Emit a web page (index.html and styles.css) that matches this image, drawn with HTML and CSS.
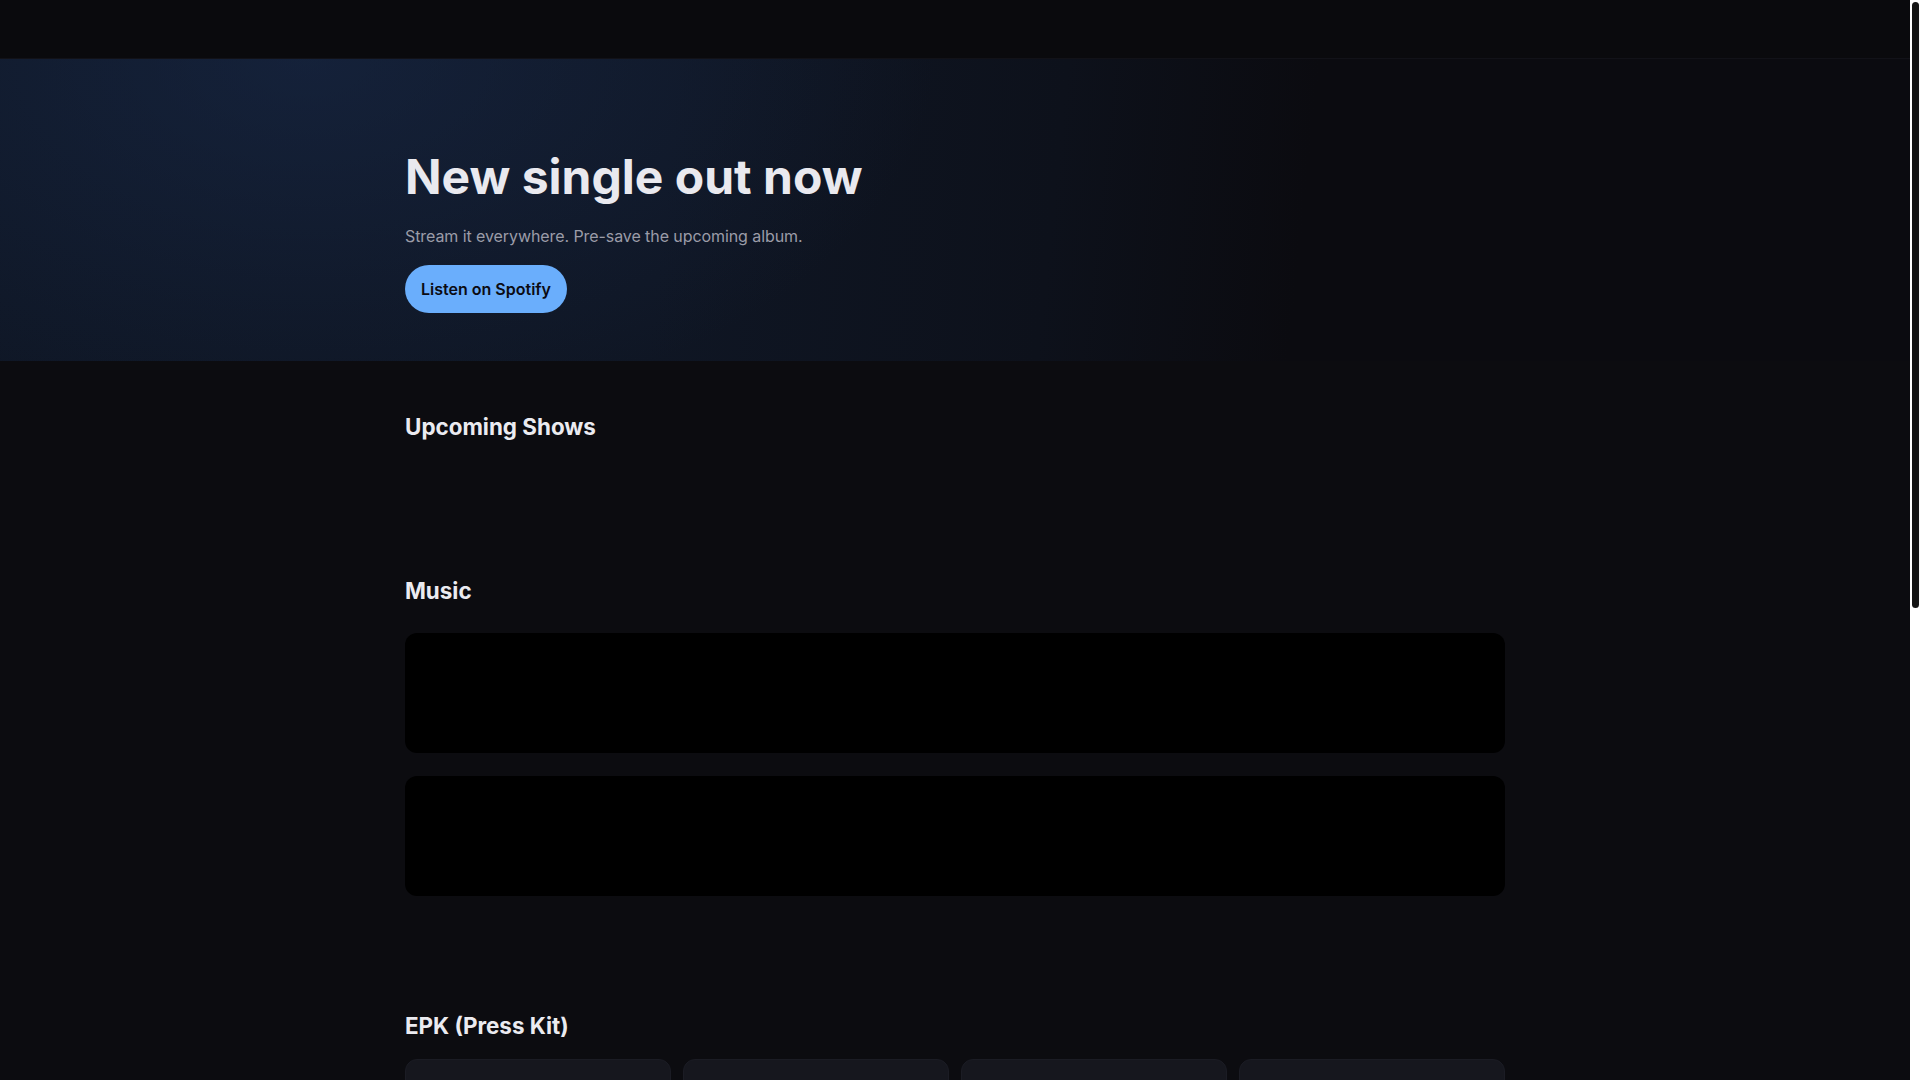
FILE: index.html
```html
<!DOCTYPE html>
<html lang="en">
<head>
<meta charset="utf-8">
<title>New single out now</title>
<link rel="stylesheet" href="styles.css">
</head>
<body>
<header class="topbar"></header>
<section class="hero">
  <div class="container">
    <h1 class="hero-title">New single out now</h1>
    <p class="hero-sub">Stream it everywhere. Pre-save the upcoming album.</p>
    <a class="btn" href="#">Listen on Spotify</a>
  </div>
</section>
<main>
  <section class="section">
    <div class="container">
      <h2 class="section-title">Upcoming Shows</h2>
      <div class="shows"></div>
    </div>
  </section>
  <section class="section">
    <div class="container">
      <h2 class="section-title">Music</h2>
      <div class="embeds">
        <div class="embed"></div>
        <div class="embed"></div>
      </div>
    </div>
  </section>
  <section class="section">
    <div class="container">
      <h2 class="section-title">EPK (Press Kit)</h2>
      <div class="epk-grid">
        <div class="epk-card"></div>
        <div class="epk-card"></div>
        <div class="epk-card"></div>
        <div class="epk-card"></div>
      </div>
    </div>
  </section>
  <section class="section">
    <div class="container">
      <h2 class="section-title">Contact</h2>
      <div class="contact"></div>
    </div>
  </section>
</main>
<footer class="footer"></footer>
<div class="scrollbar"><div class="scrollbar-thumb"></div></div>
</body>
</html>
```
FILE: styles.css
```css
html {
  background: #0c0c10;
}
* {
  box-sizing: border-box;
}
body {
  margin: 0;
  padding-right: 10px;
  background: #0c0c10;
  color: #e8e8ee;
  font-family: Inter, "Noto Sans", "Liberation Sans", sans-serif;
}
.container {
  max-width: 1100px;
  margin: 0 auto;
}
.topbar {
  height: 59px;
  background: #0a0a0d;
  border-bottom: 1px solid #121218;
}
.hero {
  padding: 89px 0 48px;
  background:
    radial-gradient(900px 520px at 16% 0%, rgba(26, 44, 78, 0.5), rgba(26, 44, 78, 0) 70%),
    linear-gradient(96deg, #0f1726 0%, #0f1624 35%, #0d111b 55%, #0b0b10 68%, #0b0b10 100%);
}
.hero-title {
  margin: 0;
  font-size: 48px;
  line-height: 1.2;
  font-weight: 700;
  color: #e9e9ef;
}
.hero-sub {
  margin: 18px 0 17px;
  font-size: 16px;
  line-height: 24px;
  letter-spacing: -0.005em;
  color: #9b9ca8;
}
.btn {
  display: inline-block;
  padding: 14px 16px;
  font-size: 16px;
  line-height: 20px;
  font-weight: 600;
  color: #0b0b12;
  background: #6aaefc;
  border-radius: 999px;
  text-decoration: none;
}
.section {
  padding: 53px 0 44px;
}
.section-title {
  margin: 0 0 20px;
  font-size: 22.4px;
  line-height: 26px;
  font-weight: 700;
  color: #ebebf0;
}
.shows {
  min-height: 21px;
}
.embeds {
  display: flex;
  flex-direction: column;
  gap: 23px;
  padding: 9px 0 20px;
}
.embed {
  height: 120px;
  background: #000000;
  border-radius: 12px;
}
.epk-grid {
  display: grid;
  grid-template-columns: repeat(4, 1fr);
  gap: 12px;
}
.epk-card {
  height: 220px;
  background: #16171e;
  border: 1px solid #1b1c24;
  border-radius: 12px;
}
.contact {
  height: 120px;
}
.footer {
  height: 150px;
  border-top: 1px solid #15151b;
  background: #0a0a0d;
}
.scrollbar {
  position: fixed;
  top: 0;
  right: 0;
  width: 10px;
  height: 100vh;
  background: #ffffff;
}
.scrollbar-thumb {
  margin: 2px 1px 0 2px;
  height: 606px;
  background: #141414;
  border-radius: 4px;
}
```
